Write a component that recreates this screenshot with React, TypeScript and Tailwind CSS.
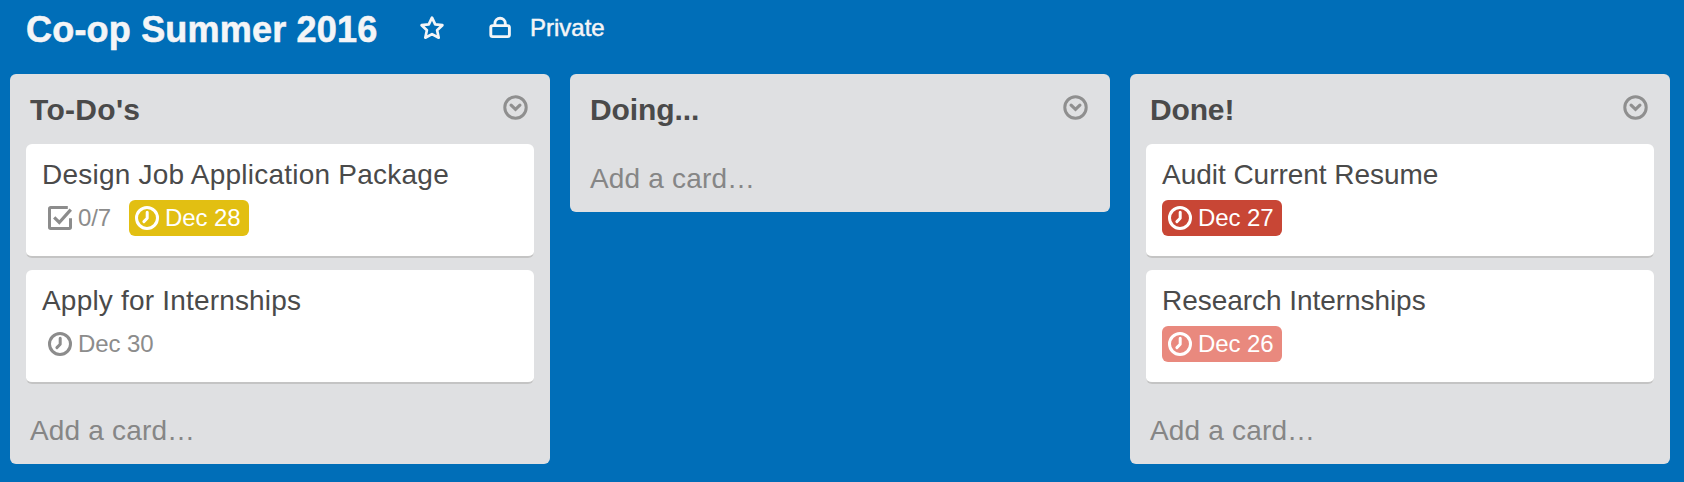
import React from "react";

type BadgeKind = "plain" | "soon" | "overdue" | "past";

interface BadgeData {
  kind: BadgeKind;
  text: string;
  checklist?: boolean;
}

interface CardData {
  title: string;
  spacing: string;
  badges: BadgeData[];
}

interface ListData {
  title: string;
  spacing: string;
  cards: CardData[];
}

const lists: ListData[] = [
  {
    title: "To-Do's",
    spacing: "tracking-[0.3px]",
    cards: [
      {
        title: "Design Job Application Package",
        spacing: "tracking-[0.23px]",
        badges: [
          { kind: "plain", text: "0/7", checklist: true },
          { kind: "soon", text: "Dec 28" },
        ],
      },
      {
        title: "Apply for Internships",
        spacing: "tracking-[0.19px]",
        badges: [{ kind: "plain", text: "Dec 30" }],
      },
    ],
  },
  { title: "Doing...", spacing: "tracking-[-0.1px]", cards: [] },
  {
    title: "Done!",
    spacing: "tracking-[-0.15px]",
    cards: [
      {
        title: "Audit Current Resume",
        spacing: "tracking-[-0.03px]",
        badges: [{ kind: "overdue", text: "Dec 27" }],
      },
      {
        title: "Research Internships",
        spacing: "tracking-[-0.05px]",
        badges: [{ kind: "past", text: "Dec 26" }],
      },
    ],
  },
];

const badgeStyles: Record<BadgeKind, string> = {
  plain: "text-[#8c8c8c]",
  soon: "bg-[#e2bf12] text-white",
  overdue: "bg-[#c84635] text-white",
  past: "bg-[#e9897e] text-white",
};

function StarIcon() {
  return (
    <svg className="size-7" viewBox="0 0 28 28" fill="none" stroke="currentColor" strokeWidth="2.7" strokeLinejoin="round">
      <path d="M14 3.6l3.2 6.8 7.2.8-5.3 5.1 1.6 7.4-6.7-3.6-6.7 3.6 1.6-7.4-5.3-5.1 7.2-.8z" />
    </svg>
  );
}

function LockIcon() {
  return (
    <svg className="h-6 w-6" viewBox="0 0 24 24" fill="none" stroke="currentColor" strokeWidth="2.9">
      <rect x="2.8" y="10.6" width="18.6" height="11" rx="1.8" />
      <path d="M6.9 10.4V8.4a5.2 5.2 0 0 1 10.4 0v2" />
    </svg>
  );
}

function MenuIcon() {
  return (
    <svg className="size-[25px]" viewBox="0 0 25 25" fill="none" stroke="currentColor">
      <circle cx="12.5" cy="12.5" r="10.7" strokeWidth="3" />
      <path d="M8.1 10.1l4.4 4.2 4.4-4.2" strokeWidth="3.2" strokeLinecap="round" strokeLinejoin="miter" />
    </svg>
  );
}

function ClockIcon() {
  return (
    <svg className="size-6 shrink-0" viewBox="0 0 24 24" fill="none" stroke="currentColor">
      <circle cx="12" cy="12" r="10.5" strokeWidth="3" />
      <path d="M12.2 6.2v6.1L8.9 15.6" strokeWidth="3" strokeLinecap="round" strokeLinejoin="round" />
    </svg>
  );
}

function ChecklistIcon() {
  return (
    <svg className="size-6 shrink-0" viewBox="0 0 24 24" fill="none" stroke="currentColor">
      <path d="M19.8 1.5H2.7a1.2 1.2 0 0 0-1.2 1.2v18.6a1.2 1.2 0 0 0 1.2 1.2h18.6a1.2 1.2 0 0 0 1.2-1.2V12.2" strokeWidth="3" />
      <path d="M6.2 11.4l5.1 5.1L22.8 3.6" strokeWidth="3.2" />
    </svg>
  );
}

function Badge({ badge }: { badge: BadgeData }) {
  return (
    <div
      className={`flex h-9 items-center gap-[6px] rounded-md pl-[6px] ${
        badge.checklist ? "w-[87px]" : "w-[120px]"
      } ${badgeStyles[badge.kind]}`}
    >
      {badge.checklist ? <ChecklistIcon /> : <ClockIcon />}
      <span className="text-[24px] leading-9 tracking-[-0.1px]">{badge.text}</span>
    </div>
  );
}

function Card({ card }: { card: CardData }) {
  return (
    <article className="rounded-md border-b-2 border-[#c4c4c4] bg-white px-4 pt-[13px] pb-5">
      <h3 className={`text-[28px] leading-9 whitespace-nowrap text-[#4a4a4a] ${card.spacing}`}>{card.title}</h3>
      <div className="mt-[7px] flex">
        {card.badges.map((badge) => (
          <Badge key={badge.text} badge={badge} />
        ))}
      </div>
    </article>
  );
}

function List({ list }: { list: ListData }) {
  return (
    <section className="w-[540px] shrink-0 rounded-md bg-[#dfe0e2] px-4 pt-[18px] pb-[15px]">
      <header className="mb-4 flex h-9 items-start justify-between pr-[6px] pl-1">
        <h2 className={`text-[30px] leading-9 font-bold text-[#4a4a4a] ${list.spacing}`}>{list.title}</h2>
        <button className="mt-[3px] text-[#8f8f8f]" aria-label="List actions">
          <MenuIcon />
        </button>
      </header>
      <div className="flex flex-col gap-3">
        {list.cards.map((card) => (
          <Card key={card.title} card={card} />
        ))}
      </div>
      <button
        className={`block pl-1 text-[28px] leading-9 tracking-[0.17px] text-[#868686] ${
          list.cards.length > 0 ? "pt-[29px]" : "pt-[17px]"
        }`}
      >
        Add a card…
      </button>
    </section>
  );
}

export default function App() {
  return (
    <main className="h-[482px] w-[1684px] overflow-hidden bg-[#006eb8] font-['Liberation_Sans',Arial,sans-serif]">
      <header className="flex h-[74px] items-start pt-[10px] pl-[26px] text-[#f4f5f7]">
        <h1 className="w-[392px] text-[36px] leading-10 font-bold tracking-[0.2px] whitespace-nowrap [-webkit-text-stroke:0.6px_#f4f5f7]">
          Co-op Summer 2016
        </h1>
        <button className="mt-[4px]" aria-label="Star board">
          <StarIcon />
        </button>
        <button className="mt-[5px] ml-[42px] flex items-start" aria-label="Visibility">
          <LockIcon />
          <span className="-mt-[5px] ml-[18px] text-[24px] leading-9 [-webkit-text-stroke:0.5px_#f4f5f7]">
            Private
          </span>
        </button>
      </header>
      <div className="flex items-start gap-5 pl-[10px]">
        {lists.map((list) => (
          <List key={list.title} list={list} />
        ))}
      </div>
    </main>
  );
}
